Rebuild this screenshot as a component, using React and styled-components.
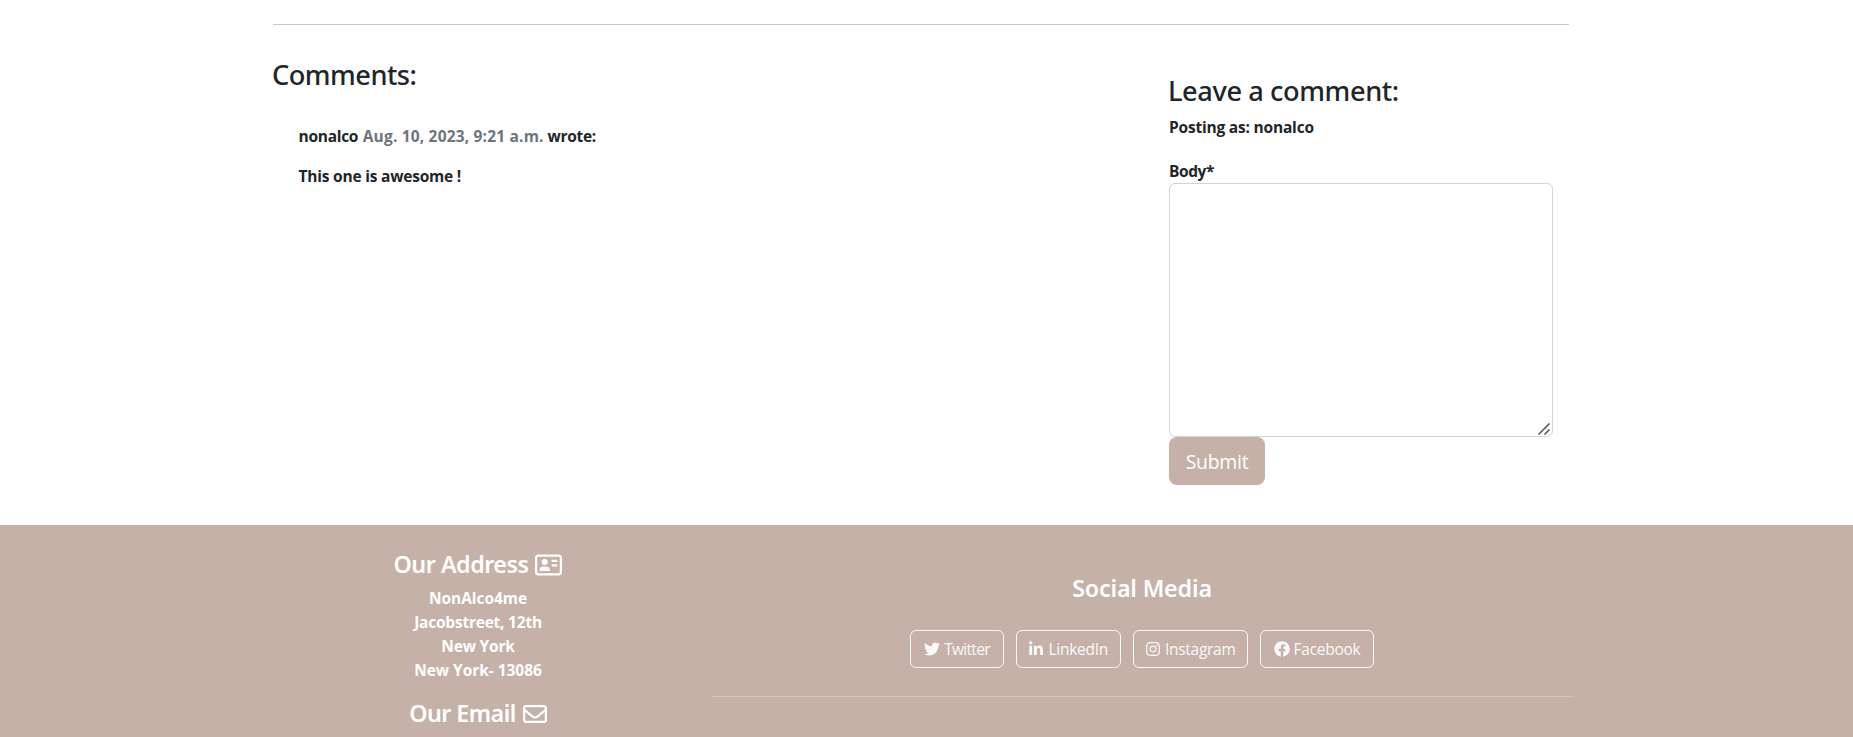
import React from 'react';
import styled, { createGlobalStyle } from 'styled-components';
import { FaTwitter, FaLinkedinIn, FaInstagram, FaFacebook } from 'react-icons/fa';
import { FaRegEnvelope } from 'react-icons/fa6';

const GlobalStyle = createGlobalStyle`
  *, *::before, *::after { box-sizing: border-box; }
  html, body { margin: 0; overflow: hidden; background: #fff; }
  body {
    font-family: "Open Sans", "Noto Sans", sans-serif;
    font-size: 15.5px;
    line-height: 24px;
    font-weight: 700;
    color: #212529;
  }
`;

const Page = styled.div`
  height: 737px;
  overflow: hidden;
  display: flex;
  flex-direction: column;
`;

const Main = styled.main`
  flex: 0 0 525px;
  margin-left: 273px;
  width: 1296px;
  padding-top: 24px;
`;

const Rule = styled.hr`
  margin: 0;
  border: 0;
  height: 1px;
  background: ${(p) => (p.$light ? '#d5c5be' : '#c7c8c9')};
`;

const Columns = styled.div`
  display: flex;
  justify-content: space-between;
  padding-top: 33px;
`;

const Comments = styled.section`
  width: 864px;
`;

const Heading = styled.h3`
  margin: 0 0 7.2px -1px;
  font-family: "Noto Sans", "Open Sans", sans-serif;
  font-size: 27.2px;
  line-height: 33.6px;
  font-weight: 500;
  white-space: nowrap;
  letter-spacing: ${(p) => p.$track || 0}px;
`;

const Comment = styled.article`
  padding: 25.6px 25.5px 0;
`;

const Text = styled.p`
  margin: 0 0 ${(p) => p.$gap || 0}px;
  white-space: nowrap;
  letter-spacing: ${(p) => p.$track || 0}px;
`;

const Timestamp = styled.span`
  margin-left: 0.8px;
  color: #6c757d;
  letter-spacing: 0.18px;
`;

const CommentForm = styled.form`
  width: 400px;
  padding: 16px 16px 0 0;
  display: flex;
  flex-direction: column;
  align-items: flex-start;
`;

const Label = styled.label`
  margin-top: 20.4px;
  letter-spacing: -0.42px;
`;

const Field = styled.div`
  position: relative;
  width: 384px;
  height: 254px;
`;

const Textarea = styled.textarea`
  display: block;
  width: 100%;
  height: 100%;
  padding: 6px 12px;
  border: 1px solid #ced4da;
  border-radius: 6px;
  background: #fff;
  font: inherit;
  resize: none;
`;

const Grip = styled.svg`
  position: absolute;
  right: 3px;
  bottom: 2px;
  width: 12px;
  height: 12px;
  stroke: #505050;
  stroke-width: 1.5;
`;

const Submit = styled.button`
  width: 96px;
  height: 48px;
  padding: 1px 0 0;
  border: 0;
  border-radius: 8px;
  background: #c6b1a8;
  color: #fff;
  font: 400 19.4px/30px "Open Sans", sans-serif;
  letter-spacing: -0.25px;
`;

const Footer = styled.footer`
  flex: 1;
  display: flex;
  padding: 24px 0 0 245px;
  background: #c6b1a8;
  color: #fff;
`;

const Contact = styled.section`
  width: 466px;
  display: flex;
  flex-direction: column;
  align-items: center;
`;

const FooterHeading = styled.h4`
  margin: 0 0 7px;
  padding-top: 1.2px;
  display: flex;
  align-items: center;
  gap: 7px;
  font-family: "Noto Sans", "Open Sans", sans-serif;
  font-size: 23.3px;
  line-height: 28.8px;
  font-weight: 600;
  white-space: nowrap;
  letter-spacing: ${(p) => p.$track || 0}px;

  svg { width: auto; height: 24px; flex: none; fill: currentColor; }
`;

const Address = styled.address`
  margin-bottom: 16px;
  font-style: normal;
  text-align: center;
`;

const Social = styled.section`
  width: 862px;
  padding-top: 24px;
  display: flex;
  flex-direction: column;
  align-items: center;

  ${Rule} { width: 100%; margin-top: 28px; }
`;

const Links = styled.nav`
  display: flex;
  gap: 12px;
  margin-top: 20px;
`;

const SocialLink = styled.a`
  width: ${(p) => p.$width}px;
  height: 38px;
  display: flex;
  align-items: center;
  justify-content: center;
  gap: 4px;
  border: 1px solid #f8f9fa;
  border-radius: 6px;
  color: #f8f9fa;
  font-size: 15.5px;
  font-weight: 400;
  white-space: nowrap;
  letter-spacing: ${(p) => p.$track}px;

  svg { width: auto; height: 16px; flex: none; }
`;

const links = [
  { name: 'Twitter', Icon: FaTwitter, width: 94, track: -0.7 },
  { name: 'LinkedIn', Icon: FaLinkedinIn, width: 104.5, track: -0.26 },
  { name: 'Instagram', Icon: FaInstagram, width: 115.5, track: -0.29 },
  { name: 'Facebook', Icon: FaFacebook, width: 114, track: -0.28 },
];

const AddressCardIcon = () => (
  <svg viewBox="0 0 576 512" width="27" height="24">
    <path d="M512 80c8.800 0 16 7.200 16 16V416c0 8.800-7.200 16-16 16H64c-8.800 0-16-7.200-16-16V96c0-8.800 7.200-16 16-16H512zM64 32C28.700 32 0 60.700 0 96V416c0 35.300 28.700 64 64 64H512c35.300 0 64-28.700 64-64V96c0-35.300-28.700-64-64-64H64zM208 256a64 64 0 1 0 0-128 64 64 0 1 0 0 128zm-32 32c-44.200 0-80 35.800-80 80c0 8.800 7.200 16 16 16H304c8.800 0 16-7.200 16-16c0-44.200-35.800-80-80-80H176zM376 144c-13.300 0-24 10.700-24 24s10.700 24 24 24h80c13.300 0 24-10.700 24-24s-10.700-24-24-24H376zm0 96c-13.300 0-24 10.700-24 24s10.700 24 24 24h80c13.300 0 24-10.700 24-24s-10.700-24-24-24H376z" />
  </svg>
);

export default function App() {
  return (
    <Page>
      <GlobalStyle />
      <Main>
        <Rule />
        <Columns>
          <Comments>
            <Heading $track={-0.51}>Comments:</Heading>
            <Comment>
              <Text $gap={16} $track={-0.28}>
                nonalco <Timestamp>Aug. 10, 2023, 9:21 a.m.</Timestamp> wrote:
              </Text>
              <Text $track={-0.21}>This one is awesome !</Text>
            </Comment>
          </Comments>
          <CommentForm>
            <Heading $track={-0.4}>Leave a comment:</Heading>
            <Text $track={-0.2}>Posting as: nonalco</Text>
            <Label htmlFor="body">Body*</Label>
            <Field>
              <Textarea id="body" />
              <Grip viewBox="0 0 12 12">
                <path d="M.5 11.500L11.500.500M6.500 11.500L11.500 6.500" />
              </Grip>
            </Field>
            <Submit type="button">Submit</Submit>
          </CommentForm>
        </Columns>
      </Main>
      <Footer>
        <Contact>
          <FooterHeading $track={-0.5}>Our Address <AddressCardIcon /></FooterHeading>
          <Address>
            <Text $track={-0.06}>NonAlco4me</Text>
            <Text $track={-0.22}>Jacobstreet, 12th</Text>
            <Text $track={-0.2}>New York</Text>
            <Text $track={-0.04}>New York- 13086</Text>
          </Address>
          <FooterHeading $track={-0.55}>Our Email <FaRegEnvelope /></FooterHeading>
        </Contact>
        <Social>
          <FooterHeading $track={-0.18}>Social Media</FooterHeading>
          <Links>
            {links.map(({ name, Icon, width, track }) => (
              <SocialLink key={name} $width={width} $track={track}>
                <Icon />
                {name}
              </SocialLink>
            ))}
          </Links>
          <Rule $light />
        </Social>
      </Footer>
    </Page>
  );
}
